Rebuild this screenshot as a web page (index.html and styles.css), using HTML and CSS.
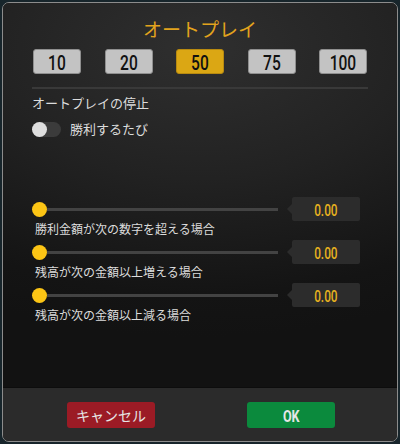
FILE: index.html
```html
<!DOCTYPE html>
<html lang="ja">
<head>
<meta charset="utf-8">
<link rel="stylesheet" href="styles.css">
</head>
<body>
<div class="panel">
  <div class="content">
    <div class="title">オートプレイ</div>
    <div class="counts">
      <div class="count"><span class="narrow">10</span></div>
      <div class="count"><span class="narrow">20</span></div>
      <div class="count active"><span class="narrow">50</span></div>
      <div class="count"><span class="narrow">75</span></div>
      <div class="count"><span class="narrow">100</span></div>
    </div>
    <div class="sep"></div>
    <div class="heading">オートプレイの停止</div>
    <div class="toggle-row">
      <div class="toggle"><div class="knob"></div></div>
      <div class="toggle-label">勝利するたび</div>
    </div>
    <div class="sliders">
      <div class="group">
        <div class="row">
          <div class="slider"><div class="thumb"></div><div class="track"></div></div>
          <div class="value"><span class="narrow">0.00</span></div>
        </div>
        <div class="label">勝利金額が次の数字を超える場合</div>
      </div>
      <div class="group">
        <div class="row">
          <div class="slider"><div class="thumb"></div><div class="track"></div></div>
          <div class="value"><span class="narrow">0.00</span></div>
        </div>
        <div class="label">残高が次の金額以上増える場合</div>
      </div>
      <div class="group">
        <div class="row">
          <div class="slider"><div class="thumb"></div><div class="track"></div></div>
          <div class="value"><span class="narrow">0.00</span></div>
        </div>
        <div class="label">残高が次の金額以上減る場合</div>
      </div>
    </div>
  </div>
  <div class="footer">
    <div class="btn cancel">キャンセル</div>
    <div class="btn ok"><span class="narrow">OK</span></div>
  </div>
</div>
</body>
</html>
```
FILE: styles.css
```css
html, body {
  margin: 0;
  padding: 0;
}
body {
  width: 400px;
  height: 444px;
  background: #17252b;
  font-family: "Noto Sans CJK JP", "Noto Sans", sans-serif;
  overflow: hidden;
}
.panel {
  box-sizing: border-box;
  margin: 2px 0 0 2px;
  width: 396px;
  height: 440px;
  border: 1.5px solid #8c8c8c;
  border-radius: 7px;
  overflow: hidden;
  display: flex;
  flex-direction: column;
  background: #151515;
}
.content {
  flex: 1;
  padding: 13px 29px 0 29px;
  background: radial-gradient(ellipse 120% 75% at 50% 12%, #2f2f2f 0%, #222 45%, #141414 85%, #121212 100%);
}
.title {
  text-align: center;
  color: #e2a31d;
  font-size: 19px;
  line-height: 26px;
}
.narrow {
  display: inline-block;
  font-family: "Roboto", "Liberation Sans", sans-serif;
  font-weight: 500;
  transform: scaleX(0.74);
}
.counts {
  margin-top: 7px;
  display: flex;
  justify-content: space-between;
  padding: 0 1px;
}
.count {
  box-sizing: border-box;
  width: 48px;
  height: 25px;
  border: 1px solid #8f8f8f;
  border-radius: 3px;
  background: #c3c3c3;
  color: #111;
  font-size: 21px;
  line-height: 23px;
  text-align: center;
  white-space: nowrap;
}
.count.active {
  background: #dba714;
  border-color: #b88a10;
}
.sep {
  margin-top: 13px;
  height: 2px;
  background: #393939;
}
.heading {
  margin-top: 5px;
  color: #dcdcdc;
  font-size: 13px;
  line-height: 18px;
}
.toggle-row {
  margin-top: 9px;
  display: flex;
  align-items: center;
  gap: 9px;
}
.toggle {
  width: 29px;
  height: 15px;
  border-radius: 8px;
  background: #3b3b3b;
}
.knob {
  width: 15px;
  height: 15px;
  border-radius: 50%;
  background: #dedede;
}
.toggle-label {
  color: #dcdcdc;
  font-size: 13px;
  line-height: 16px;
}
.sliders {
  margin-top: 60px;
  display: flex;
  flex-direction: column;
  gap: 3px;
}
.row {
  display: flex;
  align-items: center;
  height: 24px;
}
.slider {
  width: 246px;
  display: flex;
  align-items: center;
}
.thumb {
  width: 15px;
  height: 15px;
  border-radius: 50%;
  background: #fcc515;
  flex: none;
}
.track {
  flex: 1;
  height: 3px;
  background: #434343;
}
.value {
  margin-left: 14px;
  position: relative;
  width: 68px;
  height: 24px;
  background: #2c2c2c;
  border-radius: 2px;
  color: #e7b21f;
  font-size: 16px;
  line-height: 24px;
  text-align: center;
}
.value::before {
  content: "";
  position: absolute;
  left: -5px;
  top: 7px;
  border-top: 5px solid transparent;
  border-bottom: 5px solid transparent;
  border-right: 5px solid #2c2c2c;
}
.label {
  padding-left: 3px;
  color: #dcdcdc;
  font-size: 12px;
  line-height: 16px;
}
.footer {
  flex: none;
  height: 54px;
  box-sizing: border-box;
  border-top: 1px solid #0d0d0d;
  background: #2b2b2b;
  display: flex;
  justify-content: center;
  gap: 92px;
  padding-top: 14px;
  padding-left: 2px;
}
.btn {
  box-sizing: border-box;
  width: 88px;
  height: 26px;
  border-radius: 3px;
  text-align: center;
  line-height: 26px;
  color: #e6e6e6;
}
.cancel {
  background: #9b1b25;
  font-size: 14px;
}
.ok {
  background: #0b8a3d;
  font-size: 17px;
}
.ok .narrow {
  font-weight: 700;
}
```
